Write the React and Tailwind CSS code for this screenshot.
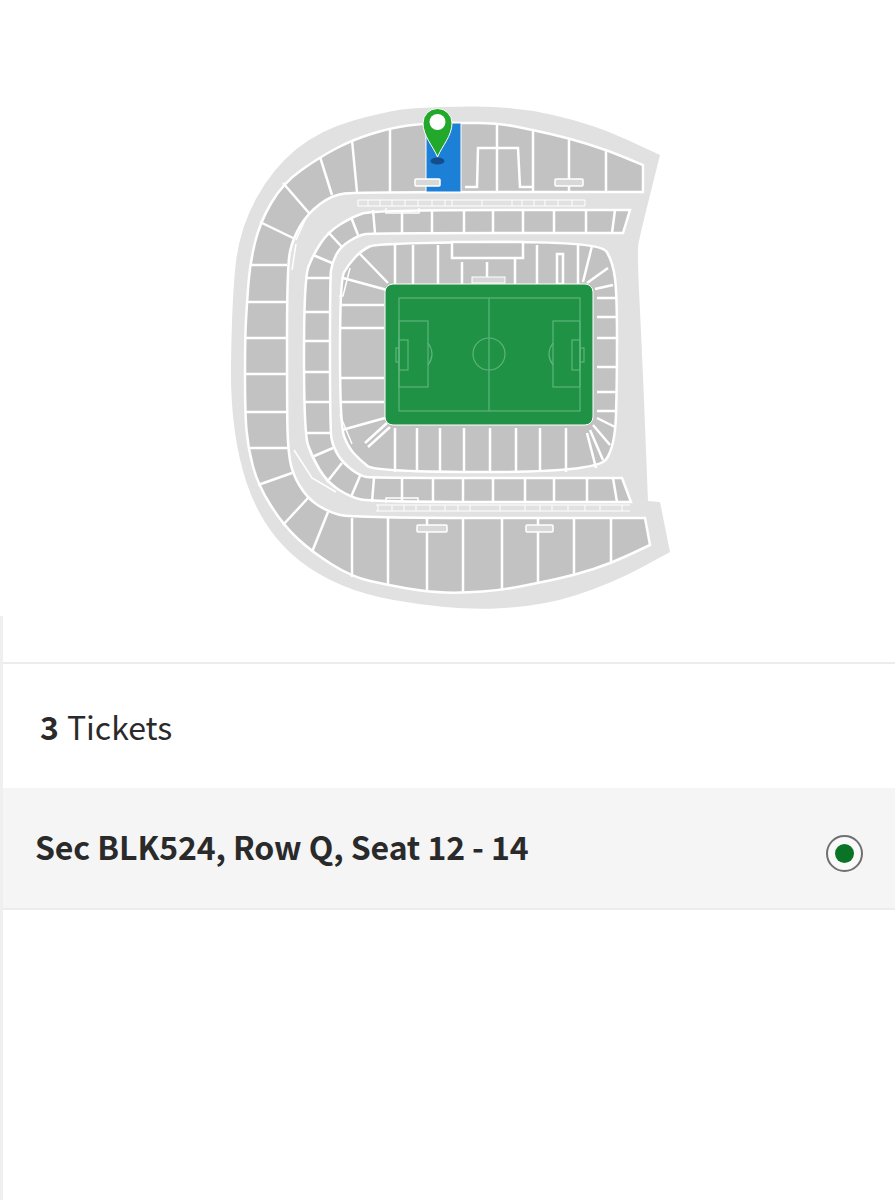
import React from 'react';

// rounds the corners of a point list, a repeated point stays sharp
function smooth(pts) {
  const mid = (a, b) => [(a[0] + b[0]) / 2, (a[1] + b[1]) / 2];
  const n = pts.length;
  const start = mid(pts[n - 1], pts[0]);
  let d = `M${start[0]} ${start[1]}`;
  pts.forEach((p, i) => {
    const m = mid(p, pts[(i + 1) % n]);
    d += ` Q${p[0]} ${p[1]} ${m[0]} ${m[1]}`;
  });
  return d + ' Z';
}

const outer = [
  [427, 107], [513, 106], [593, 124], [660, 155], [660, 155], [640, 235], [637, 252], [642, 350], [648, 501], [648, 501], [660, 502], [660, 502],
  [670, 552], [670, 552], [613, 583], [540, 607], [450, 610], [337, 590], [263, 532], [230, 433], [232, 295], [240, 228], [273, 168], [320, 130], [387, 111],
];

const upperTier = [
  [462, 123], [462, 123], [498, 123], [533, 130], [568, 138], [607, 150], [643, 165], [643, 165], [643, 192], [643, 192],
  [357, 192], [332, 195], [308, 213], [293, 238], [287, 265], [287, 412], [288, 448], [292, 473], [307, 498], [328, 512], [352, 518],
  [645, 518], [645, 518], [650, 545], [650, 545], [612, 563], [575, 575], [538, 583], [502, 590], [463, 593], [427, 592], [388, 585], [352, 577],
  [312, 552], [283, 525], [258, 485], [248, 448], [245, 412], [245, 338], [247, 302], [250, 263], [260, 222], [283, 183], [320, 157], [352, 140], [390, 128], [426, 123],
];

const middleTier = [
  [630, 210], [630, 210], [623, 233], [623, 233], [373, 233], [359, 235], [340, 247], [332, 263], [330, 278], [330, 430], [333, 447], [343, 463], [360, 476], [373, 478],
  [622, 478], [622, 478], [631, 502], [631, 502], [372, 502], [350, 497], [327, 482], [312, 457], [304, 433], [304, 278], [313, 255], [328, 232], [352, 217], [373, 210],
];

const lowerTier = [
  [377, 243], [600, 241], [613, 262], [617, 295], [617, 383], [615, 447], [597, 472], [375, 472], [360, 460], [348, 447], [340, 425], [340, 280], [348, 265], [362, 250],
];

const dividers = [
  // upper tier
  [352, 140, 357, 192], [390, 128, 390, 192], [320, 157, 332, 195], [283, 183, 309, 213], [260, 222, 293, 238],
  [250, 265, 287, 265], [247, 302, 287, 302], [245, 338, 287, 338], [245, 374, 287, 374], [245, 412, 287, 412], [248, 448, 288, 448],
  [258, 485, 292, 473], [283, 525, 308, 498], [312, 552, 328, 512], [352, 577, 352, 518], [388, 585, 388, 518], [427, 592, 427, 518],
  [463, 593, 463, 518], [502, 590, 502, 518], [538, 583, 538, 518], [574, 575, 574, 518], [611, 563, 611, 518],
  [497, 123, 497, 192], [533, 130, 533, 192], [569, 138, 569, 192], [606, 150, 606, 192],
  // middle tier
  [373, 210, 375, 233], [402, 210, 402, 233], [432, 210, 432, 233], [464, 210, 464, 233], [493, 210, 493, 233], [523, 210, 523, 233],
  [554, 210, 554, 233], [586, 210, 586, 233], [615, 210, 612, 233], [351, 217, 358, 235], [328, 232, 342, 247], [313, 255, 332, 263],
  [305, 278, 330, 278], [305, 312, 330, 312], [305, 341, 330, 341], [305, 372, 330, 372], [305, 402, 330, 402], [305, 433, 330, 433],
  [312, 457, 333, 448], [327, 482, 342, 463], [351, 497, 360, 476], [372, 502, 374, 478], [402, 478, 402, 502], [433, 478, 433, 502],
  [463, 478, 463, 502], [493, 478, 493, 502], [525, 478, 525, 502], [554, 478, 554, 502], [587, 478, 587, 502], [613, 478, 617, 502],
  // lower tier
  [395, 245, 395, 284], [413, 245, 413, 284], [438, 245, 438, 284], [462, 262, 462, 284], [487, 262, 487, 280], [515, 245, 515, 284], [537, 245, 537, 284], [578, 243, 578, 284],
  [592, 246, 583, 282], [608, 268, 587, 283], [613, 285, 595, 289], [597, 298, 616, 298], [597, 317, 617, 317], [597, 338, 617, 338],
  [597, 367, 617, 367], [597, 392, 617, 392], [597, 411, 617, 411], [597, 418, 615, 427], [593, 425, 610, 445], [590, 430, 603, 460], [587, 433, 596, 468],
  [395, 428, 395, 472], [417, 428, 417, 472], [440, 428, 440, 472], [464, 428, 464, 472], [490, 428, 490, 472], [516, 428, 516, 472], [540, 428, 540, 472], [566, 428, 566, 472],
  [340, 305, 384, 305], [340, 328, 384, 328], [340, 378, 384, 378], [340, 402, 384, 402], [342, 430, 385, 418], [343, 278, 387, 290], [359, 253, 388, 283],
  [365, 443, 387, 423], [368, 447, 390, 427],
];

// short white ticks of the concourse strips
const topTicks = [358, 368, 380, 392, 405, 418, 432, 445, 452, 482, 512, 522, 534, 545, 558, 572, 585];
const bottomTicks = [378, 392, 404, 416, 430, 445, 458, 470, 500, 525, 540, 552, 568, 585, 600, 622];

function StadiumMap() {
  return (
    <svg viewBox="0 0 895 616" className="block w-full h-[616px] blur-[0.5px]">
      <path d={smooth(outer)} fill="#e1e1e1" />
      <path d={smooth(upperTier)} fill="#c2c2c2" stroke="#ffffff" strokeWidth="2.5" />
      <path d={smooth(middleTier)} fill="#c2c2c2" stroke="#ffffff" strokeWidth="2.5" />
      <path d={smooth(lowerTier)} fill="#c2c2c2" stroke="#ffffff" strokeWidth="2.5" />

      <g stroke="#ffffff" strokeWidth="2.5" fill="none">
        {dividers.map((l, i) => (
          <line key={i} x1={l[0]} y1={l[1]} x2={l[2]} y2={l[3]} />
        ))}
        <path d="M465 187 H477 L478 148 H518 L520 187 H533" />
        <path d="M386 208 V213 H419 V208" strokeWidth="1.5" />
        <path d="M386 503 V498 H418 V503" strokeWidth="1.5" />
        <path d="M358 200 H585 M358 206 H585" strokeWidth="1" />
        <path d="M376 505 H630 M376 511 H630" strokeWidth="1" />
        <path d="M296 240 L306 218 M292 270 L296 244" strokeWidth="1.5" />
        <path d="M294 450 L312 478 L336 492" strokeWidth="1.5" />
        <path d="M350 268 L343 296 H339" strokeWidth="1.5" />
        <path d="M340 415 L352 444" strokeWidth="1.5" />
        <rect x="452" y="242" width="71" height="16" fill="#c2c2c2" />
        <rect x="557" y="254" width="6" height="30" fill="#c2c2c2" />
        {topTicks.map((x) => (
          <line key={x} x1={x} y1="200" x2={x} y2="206" strokeWidth="1" />
        ))}
        {bottomTicks.map((x) => (
          <line key={x} x1={x} y1="505" x2={x} y2="511" strokeWidth="1" />
        ))}
      </g>

      <rect x="472" y="277" width="33" height="6" fill="#d6d6d6" stroke="#ffffff" />

      {/* selected block */}
      <rect x="426" y="123" width="35" height="69" fill="#1c80d6" stroke="#ffffff" />

      {/* labels on the upper tier */}
      <g fill="#d8d8d8" stroke="#ffffff" strokeWidth="1.5">
        <rect x="415" y="179" width="25" height="7" rx="1" />
        <rect x="555" y="179" width="28" height="7" rx="1" />
        <rect x="417" y="525" width="30" height="7" rx="1" />
        <rect x="526" y="525" width="27" height="7" rx="1" />
      </g>

      {/* pitch */}
      <rect x="385" y="284" width="208" height="141" rx="8" fill="#209245" stroke="#ffffff" />
      <g stroke="#5cb57b" strokeWidth="1.2" fill="none">
        <rect x="399" y="298" width="181" height="113" />
        <line x1="489" y1="298" x2="489" y2="411" />
        <circle cx="489" cy="354" r="16" />
        <rect x="399" y="321" width="29" height="66" />
        <rect x="399" y="340" width="9" height="30" />
        <rect x="396" y="348" width="3" height="14" />
        <path d="M428 343 Q436 354 428 365" />
        <rect x="553" y="321" width="27" height="66" />
        <rect x="572" y="340" width="8" height="30" />
        <rect x="580" y="348" width="4" height="14" />
        <path d="M553 343 Q545 354 553 365" />
      </g>

      {/* location pin */}
      <ellipse cx="437.5" cy="161" rx="7" ry="3.5" fill="#134d8c" />
      <path
        d="M437.5 157 C433 146 423 136 423 123 A14.5 14.5 0 0 1 452 123 C452 136 442 146 437.5 157 Z"
        fill="#22a82a"
        stroke="#ffffff"
        strokeWidth="1"
      />
      <circle cx="437.5" cy="122" r="8" fill="#ffffff" />
    </svg>
  );
}

export default function App() {
  return (
    <div className="min-h-[1200px] bg-white text-[#2a2a2a] font-['Noto_Sans_CJK_JP','Noto_Sans',sans-serif]">
      <StadiumMap />
      <div className="min-h-[584px] border-l-[3px] border-[#efefef]">
        <div className="h-[48px] border-b-2 border-[#ececec]" />
        <div className="h-[124px] flex items-center pl-[37px] text-[32px]">
          <span className="font-bold mr-[8px]">3</span>
          <span>Tickets</span>
        </div>
        <div className="h-[122px] flex items-center justify-between bg-[#f5f5f5] border-b-2 border-[#ececec] pl-[32px] pr-[32px]">
          <span className="mb-[4px] text-[32px] font-bold tracking-[-0.1px]">Sec BLK524, Row Q, Seat 12 - 14</span>
          <span className="flex items-center justify-center w-[37px] h-[37px] mt-[10px] rounded-full border-2 border-[#707070] bg-[#f9f9f9]">
            <span className="block w-[19px] h-[19px] rounded-full bg-[#0b7326]" />
          </span>
        </div>
      </div>
    </div>
  );
}
